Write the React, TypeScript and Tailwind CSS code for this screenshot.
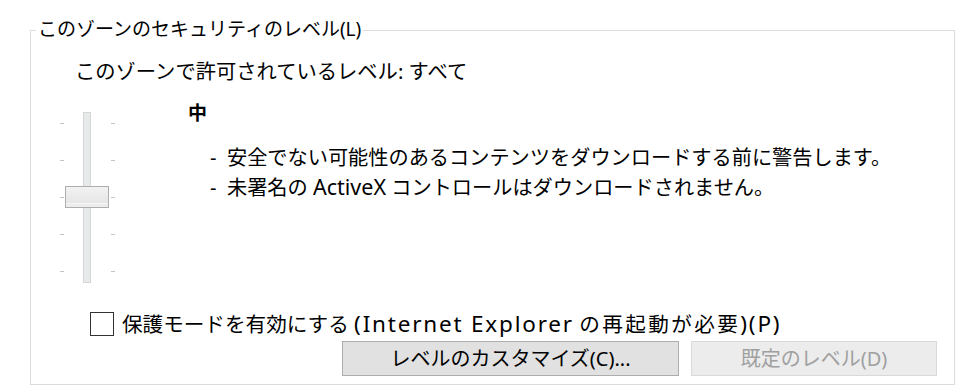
const font = { fontFamily: '"Noto Sans", "Noto Sans CJK JP", sans-serif' }

function Slider() {
  const ticks = [11, 48, 85, 122, 159]
  return (
    <div className="relative h-[171px] w-[55px] shrink-0">
      {/* track */}
      <div className="absolute left-[23px] top-0 h-[171px] w-[8px] border border-[#d6d6d6] bg-[#e7eaea]" />
      {ticks.map((t) => (
        <div key={t}>
          <div className="absolute left-0 h-px w-[4px] bg-[#c4c4c4]" style={{ top: t }} />
          <div className="absolute left-[51px] h-px w-[4px] bg-[#c4c4c4]" style={{ top: t }} />
        </div>
      ))}
      {/* thumb */}
      <div className="absolute left-[5px] top-[74px] flex h-[22px] w-[44px] flex-col border border-[#adadad] bg-[#ececec]">
        <div className="h-[16px] bg-gradient-to-b from-[#f2f2f2] to-[#e6e6e6]" />
        <div className="h-px bg-[#f5f5f5]" />
      </div>
    </div>
  )
}

export default function App() {
  return (
    <div className="h-[389px] w-[965px] bg-white pl-[30px] pt-[30px] text-black" style={font}>
      <div className="relative h-[355px] w-[925px] border border-[#dcdcdc]">
        {/* group label */}
        <div className="absolute left-[5px] top-[-15px] bg-white px-[2px] text-[19px] leading-[26px]">
          このゾーンのセキュリティのレベル(L)
        </div>

        <div className="pl-[44px] pt-[28px] text-[20.3px] leading-[24px]">
          このゾーンで許可されているレベル: すべて
        </div>

        <div className="mt-[18px] flex">
          <div className="ml-[29px] mt-[11px]">
            <Slider />
          </div>
          <div className="ml-[73px]">
            <div className="text-[19px] font-bold leading-[24px]">中</div>
            <div className="mt-[17px] pl-[22px] text-[20.2px] leading-[30px]">
              <div>-&nbsp; 安全でない可能性のあるコンテンツをダウンロードする前に警告します。</div>
              <div>
                -&nbsp; 未署名の <span className="text-[21.5px]">ActiveX</span> コントロールはダウンロードされません。
              </div>
            </div>
          </div>
        </div>

        <div className="mt-[29px] ml-[59px] flex items-center gap-[8px]">
          <div className="h-[24px] w-[24px] border border-[#333333] bg-white" />
          <span className="whitespace-nowrap text-[20.6px] leading-[24px]">
            保護モードを有効にする{" "}
            <span className="text-[22.5px] tracking-[1.8px]">(Internet Explorer</span>{" "}
            <span className="tracking-[2.4px]">の再起動が必要</span>
            <span className="text-[22.5px] tracking-[1.8px]">)(P)</span>
          </span>
        </div>

        <div className="mt-[5px] flex justify-end gap-[12px] pr-[17px]">
          <button className="h-[35px] w-[337px] border border-[#adadad] bg-[#e1e1e1] text-[20px] leading-[24px] text-black">
            レベルのカスタマイズ(C)...
          </button>
          <button className="h-[35px] w-[246px] border border-[#d9d9d9] bg-[#ececec] text-[20px] leading-[24px] text-[#a0a0a0]">
            既定のレベル(D)
          </button>
        </div>
      </div>
    </div>
  )
}
